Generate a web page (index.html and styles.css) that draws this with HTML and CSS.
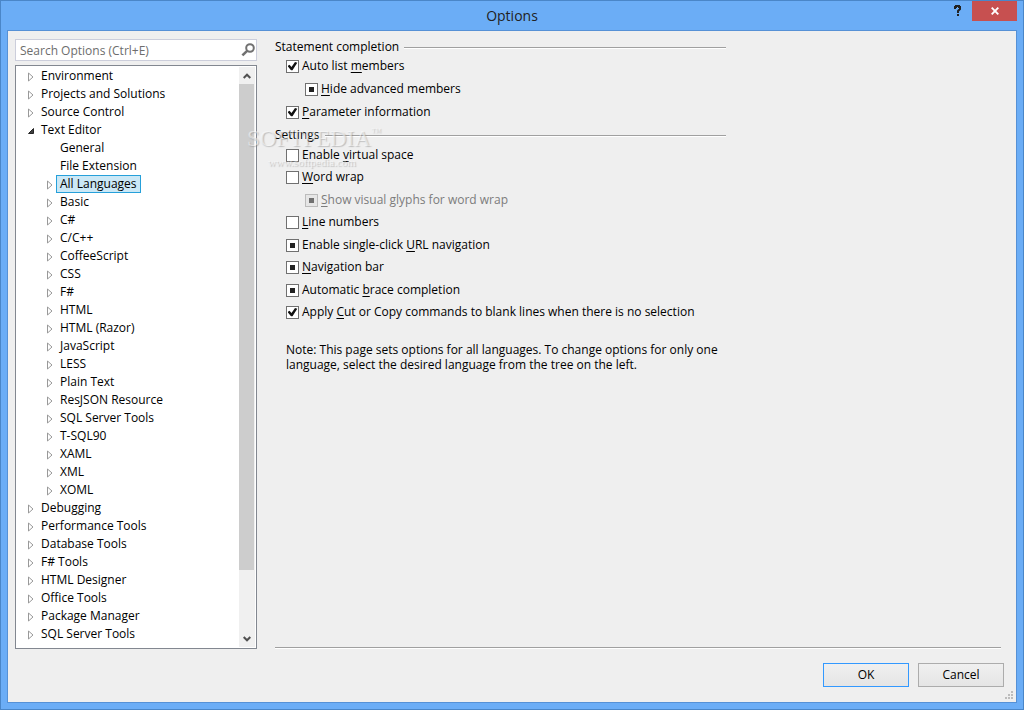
FILE: index.html
```html
<!DOCTYPE html>
<html lang="en">
<head>
    <meta charset="UTF-8">
    <meta name="viewport" content="width=device-width, initial-scale=1.0">
    <title>Options</title>
    <link rel="stylesheet" href="styles.css">
</head>
<body>
    <svg class="symbols" width="0" height="0" aria-hidden="true">
        <symbol id="closed" viewBox="0 0 8 10"><path d="M1.5 1v8L6 5z" fill="#fff" stroke="#999"/></symbol>
        <symbol id="open" viewBox="0 0 8 10"><path d="M6.5 2.5v5h-5z" fill="#404040" stroke="#262626"/></symbol>
    </svg>

    <div class="window">
        <header class="titlebar">
            <h1>Options</h1>
            <div class="window-buttons">
                <button class="help" aria-label="Help">
                    <svg width="8" height="12" viewBox="0 0 8 12"><path d="M1 4V2h1V1h3v1h1v2L4 6v2" fill="none" stroke="#222" stroke-width="2"/><path d="M3 9h2v2H3z" fill="#222"/></svg>
                </button>
                <button class="close" aria-label="Close">
                    <svg width="8" height="8" viewBox="0 0 8 8"><path d="M.7.7l6.6 6.6M7.3.7L.7 7.3" stroke="#fff" stroke-width="1.9"/></svg>
                </button>
            </div>
        </header>

        <main class="client">
            <div class="content">
                <aside class="sidebar">
                    <div class="search">
                        <input type="text" id="search" placeholder="Search Options (Ctrl+E)" aria-label="Search Options">
                        <button aria-label="Search">
                            <svg width="14" height="14" viewBox="0 0 14 14"><circle cx="9" cy="5" r="3.8" fill="none" stroke="#717171" stroke-width="2"/><path d="M6.4 7.6L1.4 12.4" stroke="#717171" stroke-width="2.6"/></svg>
                        </button>
                    </div>
                    <div class="tree-box">
                        <ul class="tree">
                            <li><button aria-label="Expand"><svg><use href="#closed"/></svg></button><span>Environment</span></li>
                            <li><button aria-label="Expand"><svg><use href="#closed"/></svg></button><span>Projects and Solutions</span></li>
                            <li><button aria-label="Expand"><svg><use href="#closed"/></svg></button><span>Source Control</span></li>
                            <li><button aria-label="Collapse"><svg><use href="#open"/></svg></button><span>Text Editor</span>
                                <ul>
                                    <li class="leaf"><span>General</span></li>
                                    <li class="leaf"><span>File Extension</span></li>
                                    <li><button aria-label="Expand"><svg><use href="#closed"/></svg></button><span class="selected">All Languages</span></li>
                                    <li><button aria-label="Expand"><svg><use href="#closed"/></svg></button><span>Basic</span></li>
                                    <li><button aria-label="Expand"><svg><use href="#closed"/></svg></button><span>C#</span></li>
                                    <li><button aria-label="Expand"><svg><use href="#closed"/></svg></button><span>C/C++</span></li>
                                    <li><button aria-label="Expand"><svg><use href="#closed"/></svg></button><span>CoffeeScript</span></li>
                                    <li><button aria-label="Expand"><svg><use href="#closed"/></svg></button><span>CSS</span></li>
                                    <li><button aria-label="Expand"><svg><use href="#closed"/></svg></button><span>F#</span></li>
                                    <li><button aria-label="Expand"><svg><use href="#closed"/></svg></button><span>HTML</span></li>
                                    <li><button aria-label="Expand"><svg><use href="#closed"/></svg></button><span>HTML (Razor)</span></li>
                                    <li><button aria-label="Expand"><svg><use href="#closed"/></svg></button><span>JavaScript</span></li>
                                    <li><button aria-label="Expand"><svg><use href="#closed"/></svg></button><span>LESS</span></li>
                                    <li><button aria-label="Expand"><svg><use href="#closed"/></svg></button><span>Plain Text</span></li>
                                    <li><button aria-label="Expand"><svg><use href="#closed"/></svg></button><span>ResJSON Resource</span></li>
                                    <li><button aria-label="Expand"><svg><use href="#closed"/></svg></button><span>SQL Server Tools</span></li>
                                    <li><button aria-label="Expand"><svg><use href="#closed"/></svg></button><span>T-SQL90</span></li>
                                    <li><button aria-label="Expand"><svg><use href="#closed"/></svg></button><span>XAML</span></li>
                                    <li><button aria-label="Expand"><svg><use href="#closed"/></svg></button><span>XML</span></li>
                                    <li><button aria-label="Expand"><svg><use href="#closed"/></svg></button><span>XOML</span></li>
                                </ul>
                            </li>
                            <li><button aria-label="Expand"><svg><use href="#closed"/></svg></button><span>Debugging</span></li>
                            <li><button aria-label="Expand"><svg><use href="#closed"/></svg></button><span>Performance Tools</span></li>
                            <li><button aria-label="Expand"><svg><use href="#closed"/></svg></button><span>Database Tools</span></li>
                            <li><button aria-label="Expand"><svg><use href="#closed"/></svg></button><span>F# Tools</span></li>
                            <li><button aria-label="Expand"><svg><use href="#closed"/></svg></button><span>HTML Designer</span></li>
                            <li><button aria-label="Expand"><svg><use href="#closed"/></svg></button><span>Office Tools</span></li>
                            <li><button aria-label="Expand"><svg><use href="#closed"/></svg></button><span>Package Manager</span></li>
                            <li><button aria-label="Expand"><svg><use href="#closed"/></svg></button><span>SQL Server Tools</span></li>
                        </ul>
                        <div class="scrollbar">
                            <button aria-label="Scroll up"><svg width="8" height="6" viewBox="0 0 8 6"><path d="M.7 5L4 1.7 7.3 5" fill="none" stroke="#505050" stroke-width="2"/></svg></button>
                            <div class="track"><div class="thumb"></div></div>
                            <button aria-label="Scroll down"><svg width="8" height="6" viewBox="0 0 8 6"><path d="M.7 1L4 4.3 7.3 1" fill="none" stroke="#505050" stroke-width="2"/></svg></button>
                        </div>
                    </div>
                </aside>

                <section class="page">
                    <h2>Statement completion</h2>
                    <div class="options completion">
                        <label><input type="checkbox" checked><span>Auto list <u>m</u>embers</span></label>
                        <label class="sub"><input type="checkbox" class="mixed"><span><u>H</u>ide advanced members</span></label>
                        <label><input type="checkbox" checked><span><u>P</u>arameter information</span></label>
                    </div>
                    <h2>Settings</h2>
                    <div class="options settings">
                        <label><input type="checkbox"><span>Enable <u>v</u>irtual space</span></label>
                        <label><input type="checkbox"><span><u>W</u>ord wrap</span></label>
                        <label class="sub disabled"><input type="checkbox" class="mixed" disabled><span><u>S</u>how visual glyphs for word wrap</span></label>
                        <label><input type="checkbox"><span><u>L</u>ine numbers</span></label>
                        <label><input type="checkbox" class="mixed"><span>Enable single-click <u>U</u>RL navigation</span></label>
                        <label><input type="checkbox" class="mixed"><span><u>N</u>avigation bar</span></label>
                        <label><input type="checkbox" class="mixed"><span>Automatic <u>b</u>race completion</span></label>
                        <label><input type="checkbox" checked><span>Apply <u>C</u>ut or Copy commands to blank lines when there is no selection</span></label>
                    </div>
                    <p class="note">Note: This page sets options for all languages. To change options for only one language, select the desired language from the tree on the left.</p>
                </section>
            </div>

            <footer class="actions">
                <button class="default">OK</button>
                <button>Cancel</button>
            </footer>
            <svg class="grip" width="8" height="8" viewBox="0 0 8 8"><path d="M6 0h2v2H6zM3 3h2v2H3zM6 3h2v2H6zM0 6h2v2H0zM3 6h2v2H3zM6 6h2v2H6z" fill="#bcbcbc"/></svg>
        </main>

        <div class="watermark">
            <div class="brand">SOFTPEDIA<sup>™</sup></div>
            <div class="site">www.softpedia.com</div>
        </div>
    </div>

    <script>
        document.querySelectorAll(".mixed").forEach(function (box) {
            box.indeterminate = true;
        });
    </script>
</body>
</html>
```
FILE: styles.css
```css
* { box-sizing: border-box; }
body { margin: 0; font-family: "Open Sans", "Noto Sans", sans-serif; font-size: 12px; line-height: 18px; color: #000; }
button, input { font: inherit; color: inherit; }
button { padding: 0; border: 0; background: none; }
h1, h2, p, ul { margin: 0; padding: 0; font-weight: normal; }
ul { list-style: none; }
u { text-underline-offset: 2px; text-decoration-skip-ink: none; }
.symbols { position: absolute; }

.window { position: relative; display: flex; flex-direction: column; min-height: 100vh; padding: 0 7px 7px; border: 1px solid #4a86c8; background: #6badf6; }

.titlebar { display: grid; grid-template-columns: 1fr auto 1fr; height: 29px; }
.titlebar h1 { grid-column: 2; font-size: 14px; line-height: 29px; color: #222; }
.window-buttons { display: flex; justify-content: flex-end; align-items: flex-start; margin-right: -1px; }
.window-buttons button { display: flex; align-items: center; justify-content: center; height: 20px; }
.help { width: 28px; }
.close { width: 45px; background: #c75050; }

.client { position: relative; flex: 1; display: flex; flex-direction: column; margin: 0 -1px -1px; border: 1px solid #5691d6; background: #efefef; }
.content { flex: 1; display: flex; gap: 18px; padding: 8px 15px 0 7px; }

.sidebar { display: flex; flex-direction: column; gap: 4px; width: 242px; flex-shrink: 0; }
.search { display: flex; height: 22px; border: 1px solid #cccedb; background: #fff; }
.search input { flex: 1; min-width: 0; padding: 2px 4px 0; border: 0; outline: 0; background: none; }
.search input::placeholder { color: #6d6d6d; }
.search button { display: flex; align-items: center; padding-right: 1px; }

.tree-box { flex: 1; display: flex; border: 1px solid #828790; background: #fff; }
.tree { flex: 1; padding: 1px 0 1px 10px; }
.tree ul { padding-left: 19px; }
.tree button { display: inline-block; width: 11px; height: 18px; vertical-align: top; }
.tree svg { display: block; width: 8px; height: 10px; margin: 2px 0 0 1px; }
.tree span { display: inline-block; height: 18px; padding: 0 4px; vertical-align: top; }
.tree li.leaf { padding-left: 11px; }
.tree .selected { padding: 0 3px; border: 1px solid #26a0da; background: #cbe8f6; line-height: 16px; }

.scrollbar { display: flex; flex-direction: column; width: 17px; padding: 1px 1px 1px 0; background: #fff; }
.scrollbar button { display: flex; align-items: center; justify-content: center; height: 17px; background: #f0f0f0; }
.track { flex: 1; background: #f0f0f0; }
.thumb { width: 15px; height: 89%; background: #cdcdcd; }

.page { flex: 1; margin-bottom: 1px; border-bottom: 1px solid #a0a0a0; box-shadow: 0 1px #fff; }
.page h2 { display: flex; align-items: center; gap: 5px; max-width: 451px; font-size: 12px; line-height: 16px; }
.page h2::after { content: ""; flex: 1; height: 1px; background: #a0a0a0; box-shadow: 0 1px #fff; }
.options { padding-left: 11px; }
.options label { display: flex; align-items: center; gap: 3px; height: 22px; }
.options .sub { padding-left: 19px; }
.completion { padding-bottom: 3px; }
.completion label { margin-bottom: 1px; }
.completion .sub { margin-top: 1px; }
.settings label:nth-child(odd) { margin-top: 1px; }
.disabled { color: #7c7c7c; }

input[type="checkbox"] { appearance: none; display: grid; place-items: center; width: 13px; height: 13px; margin: 0; border: 1px solid #707070; background: #fff; }
input[type="checkbox"]:checked::before { content: ""; width: 10px; height: 9px; background: #111; clip-path: polygon(0 50%, 20% 35%, 40% 60%, 75% 5%, 98% 15%, 50% 98%, 35% 98%); }
.mixed::before { content: ""; width: 5px; height: 5px; background: #212121; }
input[type="checkbox"]:disabled { border-color: #bcbcbc; background: #e6e6e6; }
.mixed:disabled::before { background: #707070; }

.note { max-width: 451px; padding: 19px 0 0 11px; line-height: 15px; }

.actions { display: flex; justify-content: flex-end; gap: 9px; padding: 14px 12px 15px; }
.actions button { width: 86px; height: 24px; border: 1px solid #acacac; background: linear-gradient(#f0f0f0, #e5e5e5); }
.actions .default { border-color: #3399ff; }
.grip { position: absolute; right: 3px; bottom: 3px; }

.watermark { position: absolute; left: 246px; top: 126px; color: rgba(255, 255, 255, .5); text-shadow: 1px 1px 1px rgba(120, 120, 120, .4); pointer-events: none; }
.brand { font-family: "Liberation Serif", serif; font-size: 23px; line-height: 24px; }
.brand sup { font-size: 10px; line-height: 10px; vertical-align: top; }
.site { padding: 4px 0 0 21px; font-family: "Liberation Serif", serif; font-size: 11px; line-height: 14px; }
```
